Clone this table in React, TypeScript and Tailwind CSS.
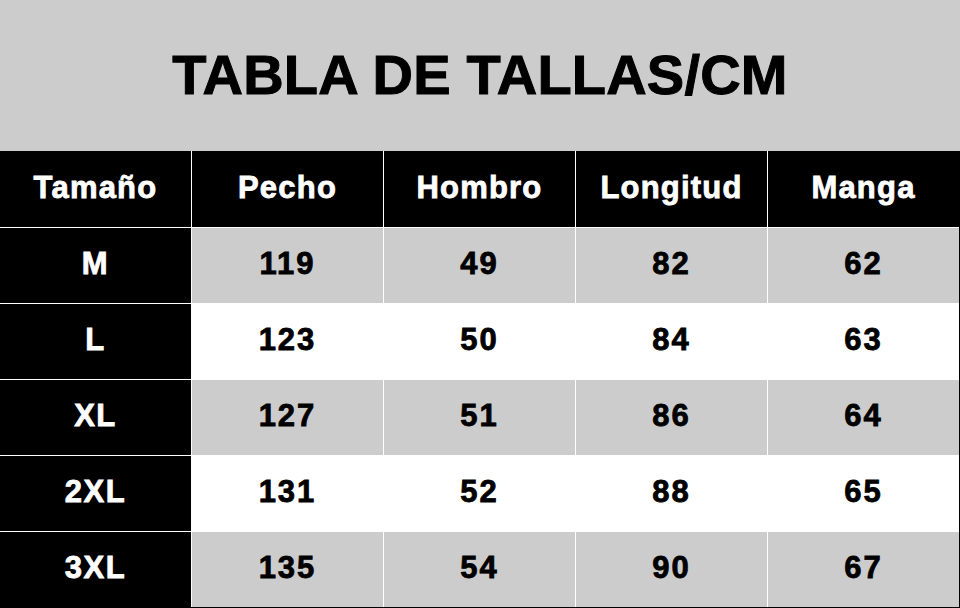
const headers = ["Tamaño", "Pecho", "Hombro", "Longitud", "Manga"];

const rows = [
  { size: "M", values: [119, 49, 82, 62] },
  { size: "L", values: [123, 50, 84, 63] },
  { size: "XL", values: [127, 51, 86, 64] },
  { size: "2XL", values: [131, 52, 88, 65] },
  { size: "3XL", values: [135, 54, 90, 67] },
];

export default function App() {
  return (
    <div className="w-[960px] h-[608px] overflow-hidden bg-[#cccccc] font-['Liberation_Sans',Arial,sans-serif]">
      {/* Title */}
      <div className="h-[151px] flex items-center justify-center pb-[2px]">
        <h1 className="text-[56px] font-bold leading-none text-black tracking-[0.2px] [-webkit-text-stroke:1px_black]">
          TABLA DE TALLAS/CM
        </h1>
      </div>

      {/* Table */}
      <div className="bg-black pr-px pb-px">
        <div className="grid grid-cols-[repeat(5,191px)] grid-rows-[76px_repeat(5,75px)] gap-px bg-white">
          {headers.map((h) => (
            <div
              key={h}
              className="bg-black flex items-center justify-center pb-[1px] text-[31px] font-bold tracking-[1.2px] text-white [-webkit-text-stroke:0.8px_white]"
            >
              {h}
            </div>
          ))}

          {rows.map((row, i) => {
            const bg = i % 2 === 0 ? "bg-[#cccccc]" : "bg-white";
            return [
              <div
                key={row.size}
                className="bg-black flex items-center justify-center pb-[2px] text-[31px] font-bold tracking-[1.5px] text-white [-webkit-text-stroke:0.8px_white]"
              >
                {row.size}
              </div>,
              ...row.values.map((v, j) => (
                <div
                  key={row.size + j}
                  className={`${bg} flex items-center justify-center pb-[2px] text-[31px] font-bold tracking-[2px] text-black [-webkit-text-stroke:0.8px_black]`}
                >
                  {v}
                </div>
              )),
            ];
          })}
        </div>
      </div>
    </div>
  );
}
